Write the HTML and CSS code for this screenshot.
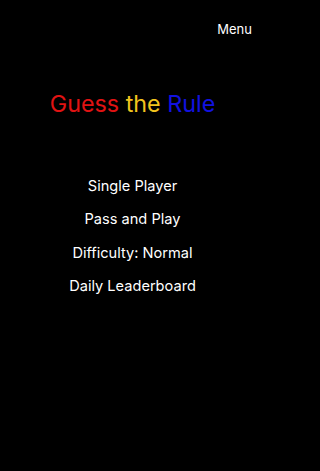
FILE: index.html
```html
<!DOCTYPE html>
<html lang="en">
<head>
<meta charset="utf-8">
<title>Guess the Rule</title>
<link rel="stylesheet" href="styles.css">
</head>
<body>
<div class="screen">
  <header class="topbar">
    <span class="menu-btn">Menu</span>
  </header>
  <h1 class="title"><span class="red">Guess</span> <span class="yellow">the</span> <span class="blue">Rule</span></h1>
  <nav class="options">
    <div class="option">Single Player</div>
    <div class="option">Pass and Play</div>
    <div class="option">Difficulty: Normal</div>
    <div class="option">Daily Leaderboard</div>
  </nav>
</div>
</body>
</html>
```
FILE: styles.css
```css
html, body {
  margin: 0;
  padding: 0;
  background: #000;
}
body {
  font-family: Inter, "Liberation Sans", Arial, sans-serif;
  color: #fff;
}
.screen {
  width: 265px;
  height: 471px;
  display: flex;
  flex-direction: column;
  align-items: center;
}
.topbar {
  align-self: stretch;
  display: flex;
  justify-content: flex-end;
  padding: 20px 13px 0 0;
  height: 18px;
}
.menu-btn {
  font-size: 13px;
  line-height: 18px;
}
.title {
  margin: 53px 0 0 0;
  font-size: 23.3px;
  font-weight: 400;
  line-height: 26px;
}
.red { color: #e01313; }
.yellow { color: #f2c41e; }
.blue { color: #1212e0; }
.options {
  margin-top: 60px;
  display: flex;
  flex-direction: column;
  align-items: center;
  gap: 15.4px;
}
.option {
  font-size: 14.6px;
  line-height: 18px;
}
```
